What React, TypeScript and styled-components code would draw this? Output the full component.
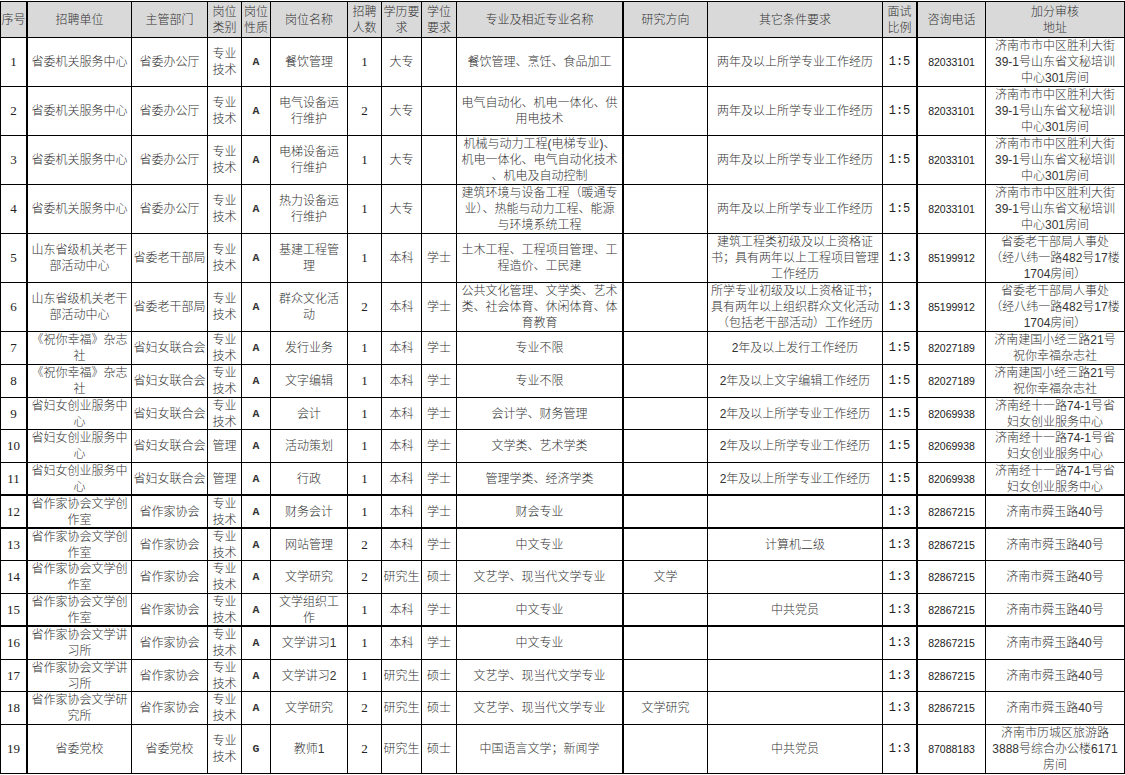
import React from "react";
import styled, { createGlobalStyle, css } from "styled-components";

const Global = createGlobalStyle`
  html, body { margin: 0; padding: 0; background: #fff; }
  body { font-family: "Noto Sans CJK SC", sans-serif; color: #1a1a1a; }
`;

type Kind = "text" | "num" | "mono" | "letter" | "phone";

const COLS = [27, 104, 76, 34, 29, 77, 34, 40, 35, 167, 84, 175, 35, 68, 139];
const PADS = [0, 4, 1, 1, 0, 4, 0, 1, 1, 3, 2, 2, 0, 1, 2];
const KINDS: Kind[] = [
  "num", "text", "text", "text", "letter", "text", "num", "text", "text",
  "text", "text", "text", "mono", "phone", "text",
];
const THICK_RIGHT = new Set([0, 9, 12]);
const THICK_BOTTOM = new Set([11, 12, 15]);

const Sheet = styled.div`
  display: grid;
  width: 1125px;
  box-sizing: border-box;
  margin-top: 1px;
  border-left: 1px solid #000;
  border-top: 1px solid #000;
  grid-template-columns: ${COLS.map((c) => `${c}px`).join(" ")};
  grid-template-rows: 36px repeat(6, 49px) 33px 33px 32px 33px 33px 33px 32px 33px 33px 33px 32px 33px 49px;
`;

const fontFor = (k: Kind) => {
  switch (k) {
    case "num":
      return css`
        font-family: "Liberation Serif", "Noto Sans CJK SC", serif;
        font-size: 13px;
        color: #222;
      `;
    case "mono":
      return css`
        font-family: "Liberation Mono", "Noto Sans CJK SC", monospace;
        font-size: 12px;
        color: #222;
      `;
    case "letter":
      return css`
        font-family: "Liberation Mono", "Noto Sans CJK SC", monospace;
        font-size: 11.5px;
        font-weight: 700;
        color: #333;
      `;
    case "phone":
      return css`
        font-family: "Liberation Sans", "Noto Sans CJK SC", sans-serif;
        font-size: 10.5px;
        color: #222;
      `;
    default:
      return css`
        font-family: "Liberation Sans", "Noto Sans CJK SC", sans-serif;
        font-size: 12px;
        font-weight: 300;
        color: #333;
      `;
  }
};

const Cell = styled.div<{
  $pad: number;
  $kind: Kind;
  $thickR: boolean;
  $thickB: boolean;
  $header?: boolean;
}>`
  box-sizing: border-box;
  display: flex;
  align-items: center;
  justify-content: center;
  text-align: center;
  white-space: pre;
  overflow: hidden;
  line-height: 16px;
  padding: 0 ${(p) => p.$pad}px;
  border-right: ${(p) => (p.$thickR ? 2 : 1)}px solid #000;
  border-bottom: ${(p) => (p.$thickB ? 2 : 1)}px solid #000;
  background: ${(p) => (p.$header ? "#d9d9d9" : "#fff")};
  ${(p) => fontFor(p.$header ? "text" : p.$kind)}
`;

const HEAD = [
  "序号", "招聘单位", "主管部门", "岗位\n类别", "岗位\n性质", "岗位名称", "招聘\n人数",
  "学历要\n求", "学位\n要求", "专业及相近专业名称", "研究方向", "其它条件要求",
  "面试\n比例", "咨询电话", "加分审核\n地址",
];

const JG = "专业\n技术";
const ADDR1 = "济南市市中区胜利大街\n39-1号山东省文秘培训\n中心301房间";
const ADDR2 = "省委老干部局人事处\n（经八纬一路482号17楼\n1704房间）";
const ADDR3 = "济南建国小经三路21号\n祝你幸福杂志社";
const ADDR4 = "济南经十一路74-1号省\n妇女创业服务中心";
const ADDR5 = "济南市舜玉路40号";
const U1 = "省委机关服务中心";
const U2 = "山东省级机关老干\n部活动中心";
const U3 = "《祝你幸福》杂志\n社";
const U4 = "省妇女创业服务中\n心";
const U5 = "省作家协会文学创\n作室";
const W2 = "两年及以上所学专业工作经历";
const W3 = "2年及以上所学专业工作经历";
const LIT = "文艺学、现当代文学专业";

const ROWS: string[][] = [
  ["1", U1, "省委办公厅", JG, "A", "餐饮管理", "1", "大专", "", "餐饮管理、烹饪、食品加工", "", W2, "1:5", "82033101", ADDR1],
  ["2", U1, "省委办公厅", JG, "A", "电气设备运\n行维护", "2", "大专", "", "电气自动化、机电一体化、供\n用电技术", "", W2, "1:5", "82033101", ADDR1],
  ["3", U1, "省委办公厅", JG, "A", "电梯设备运\n行维护", "1", "大专", "", "机械与动力工程(电梯专业)、\n机电一体化、电气自动化技术\n、机电及自动控制", "", W2, "1:5", "82033101", ADDR1],
  ["4", U1, "省委办公厅", JG, "A", "热力设备运\n行维护", "1", "大专", "", "建筑环境与设备工程（暖通专\n业）、热能与动力工程、能源\n与环境系统工程", "", W2, "1:5", "82033101", ADDR1],
  ["5", U2, "省委老干部局", JG, "A", "基建工程管\n理", "1", "本科", "学士", "土木工程、工程项目管理、工\n程造价、工民建", "", "建筑工程类初级及以上资格证\n书；具有两年以上工程项目管理\n工作经历", "1:3", "85199912", ADDR2],
  ["6", U2, "省委老干部局", JG, "A", "群众文化活\n动", "2", "本科", "学士", "公共文化管理、文学类、艺术\n类、社会体育、休闲体育、体\n育教育", "", "所学专业初级及以上资格证书；\n具有两年以上组织群众文化活动\n（包括老干部活动）工作经历", "1:3", "85199912", ADDR2],
  ["7", U3, "省妇女联合会", JG, "A", "发行业务", "1", "本科", "学士", "专业不限", "", "2年及以上发行工作经历", "1:5", "82027189", ADDR3],
  ["8", U3, "省妇女联合会", JG, "A", "文字编辑", "1", "本科", "学士", "专业不限", "", "2年及以上文字编辑工作经历", "1:5", "82027189", ADDR3],
  ["9", U4, "省妇女联合会", JG, "A", "会计", "1", "本科", "学士", "会计学、财务管理", "", W3, "1:5", "82069938", ADDR4],
  ["10", U4, "省妇女联合会", "管理", "A", "活动策划", "1", "本科", "学士", "文学类、艺术学类", "", W3, "1:5", "82069938", ADDR4],
  ["11", U4, "省妇女联合会", "管理", "A", "行政", "1", "本科", "学士", "管理学类、经济学类", "", W3, "1:5", "82069938", ADDR4],
  ["12", U5, "省作家协会", JG, "A", "财务会计", "1", "本科", "学士", "财会专业", "", "", "1:3", "82867215", ADDR5],
  ["13", U5, "省作家协会", JG, "A", "网站管理", "2", "本科", "学士", "中文专业", "", "计算机二级", "1:3", "82867215", ADDR5],
  ["14", U5, "省作家协会", JG, "A", "文学研究", "2", "研究生", "硕士", LIT, "文学", "", "1:3", "82867215", ADDR5],
  ["15", U5, "省作家协会", JG, "A", "文学组织工\n作", "1", "本科", "学士", "中文专业", "", "中共党员", "1:3", "82867215", ADDR5],
  ["16", "省作家协会文学讲\n习所", "省作家协会", JG, "A", "文学讲习1", "1", "本科", "学士", "中文专业", "", "", "1:3", "82867215", ADDR5],
  ["17", "省作家协会文学讲\n习所", "省作家协会", JG, "A", "文学讲习2", "1", "研究生", "硕士", LIT, "", "", "1:3", "82867215", ADDR5],
  ["18", "省作家协会文学研\n究所", "省作家协会", JG, "A", "文学研究", "2", "研究生", "硕士", LIT, "文学研究", "", "1:3", "82867215", ADDR5],
  ["19", "省委党校", "省委党校", JG, "G", "教师1", "2", "研究生", "硕士", "中国语言文学；新闻学", "", "中共党员", "1:3", "87088183", "济南市历城区旅游路\n3888号综合办公楼6171\n房间"],
];

export default function App() {
  return (
    <>
      <Global />
      <Sheet>
        {HEAD.map((h, c) => (
          <Cell
            key={`h${c}`}
            $header
            $pad={PADS[c]}
            $kind="text"
            $thickR={THICK_RIGHT.has(c)}
            $thickB={false}
          >
            {h}
          </Cell>
        ))}
        {ROWS.map((row, r) =>
          row.map((v, c) => (
            <Cell
              key={`${r}-${c}`}
              $pad={PADS[c]}
              $kind={KINDS[c]}
              $thickR={THICK_RIGHT.has(c)}
              $thickB={THICK_BOTTOM.has(r + 1)}
            >
              {v}
            </Cell>
          ))
        )}
      </Sheet>
    </>
  );
}
